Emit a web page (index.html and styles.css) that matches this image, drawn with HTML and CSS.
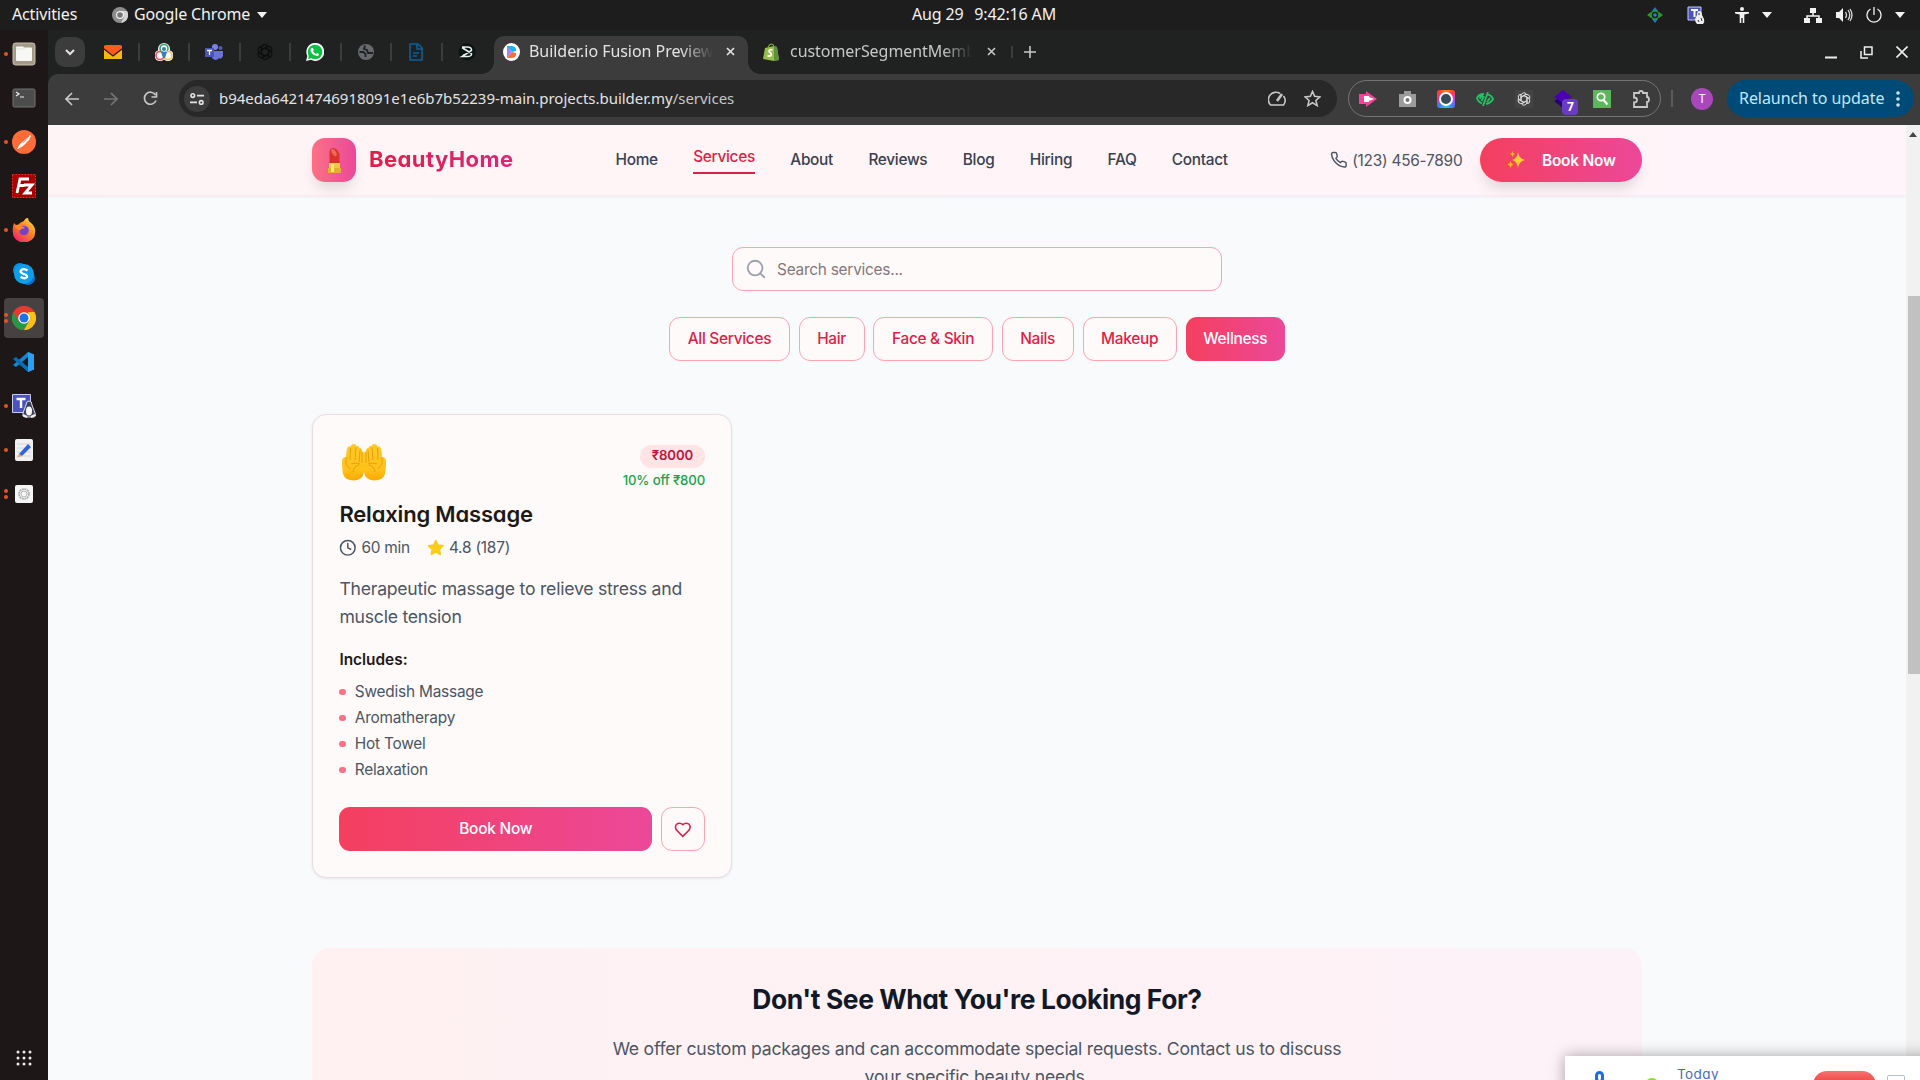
FILE: index.html
```html
<!DOCTYPE html>
<html lang="en">
<head>
<meta charset="utf-8">
<title>BeautyHome – Services</title>
<link rel="stylesheet" href="styles.css">
</head>
<body>
<div class="desktop">
  <div class="topbar">
    <span class="activities">Activities</span>
    <span class="app-menu">
      <svg width="16" height="16" viewBox="0 0 16 16"><circle cx="8" cy="8" r="8" fill="#8d8d8d"/><path d="M8 4h7A8 8 0 0 1 9 16l3-6z" fill="#d2d2d2"/><circle cx="8" cy="8" r="4" fill="#eee"/><circle cx="8" cy="8" r="2.8" fill="#777"/></svg>
      <span class="app-name">Google Chrome</span><i class="caret"></i>
    </span>
    <span class="clock"><span>Aug 29</span><span>9:42:16 AM</span></span>
    <span class="tray">
      <svg class="t1" width="16" height="16" viewBox="0 0 16 16"><path d="M8 0l3 4H5zM8 16l3-4H5z" fill="#1e78c8"/><path d="M0 8l4-3v6zM16 8l-4-3v6z" fill="#2a9a2a"/><circle cx="8" cy="8" r="4" fill="none" stroke="#2a9a2a" stroke-width="1.5"/><circle cx="8" cy="8" r="1.8" fill="#1e88d8"/></svg>
      <svg class="t2" width="18" height="18" viewBox="0 0 18 18"><path d="M1 1h13v13H1z" fill="#4b53bc" stroke="#c9cbf0"/><path d="M4 4h7M7.500 4v7" stroke="#fff" stroke-width="2"/><path d="M12 5q-2 0-2 4l-2 4q0 3 2 5h6q2-2 1-5l-2-4q0-4-3-4z" fill="#eee"/><path d="M11 8h2M11 14l1 2M14 12l1 3" stroke="#333"/></svg>
      <svg class="t3" width="14" height="16" viewBox="0 0 14 16" fill="#f2f2f2"><circle cx="7" cy="2" r="2"/><path d="M0 5h14v1.500L9.300 7.500V16H7.700v-5H6.300v5H4.700V7.500L0 6.500z"/></svg>
      <i class="caret"></i>
      <svg class="t4" width="18" height="16" viewBox="0 0 18 16" fill="#f2f2f2"><path d="M6 1h6v5H6zM0 11h6v5H0zM12 11h6v5h-6z"/><path d="M9 5v4M3 12V9h12v3" fill="none" stroke="#f2f2f2" stroke-width="1.500"/></svg>
      <svg class="t5" width="17" height="14" viewBox="0 0 17 14"><path d="M0 4h3l4-4v14l-4-4H0z" fill="#f2f2f2"/><path d="M9.500 4q2 3 0 6M12 2q3.500 5 0 10M14 1q4 6 0 12" fill="none" stroke="#ddd" stroke-width="1.300"/></svg>
      <svg class="t6" width="16" height="16" viewBox="0 0 16 16" fill="none" stroke="#f2f2f2" stroke-width="1.300"><path d="M8 0v8M4.500 2a7 7 0 1 0 7 0"/></svg>
      <i class="caret t7"></i>
    </span>
  </div>
  <div class="workspace">
    <nav class="dock">
      <div class="app run"><svg viewBox="0 0 24 24"><rect x="1" y="1" width="22" height="22" rx="2.500" fill="#a39b87" stroke="#c9c2b0"/><path d="M4 5.500q0-1 1-1h6l1 1h7q1 0 1 1V18q0 1-1 1H5q-1 0-1-1z" fill="#f7f7f5"/><path d="M4 7h8l1-1.500" fill="none" stroke="#dcd8cc" stroke-width=".7"/></svg></div>
      <div class="app"><svg viewBox="0 0 24 24"><rect x="1" y="3" width="22" height="18" rx="1.500" fill="#4c4c4c" stroke="#727272"/><path d="M4 6l3 2-3 2M8 11h4" fill="none" stroke="#eee" stroke-width="1.200"/></svg></div>
      <div class="app run"><svg viewBox="0 0 24 24"><circle cx="12" cy="12" r="12" fill="#ff6c37"/><path d="M5 19l3-5 7-6 3-3 1 1-2 4-6 6-5 3z" fill="#fff"/><path d="M11 13l6-7" stroke="#ff6c37" stroke-width=".8"/></svg></div>
      <div class="app"><svg viewBox="0 0 24 24"><path d="M0 0h24v24H0z" fill="#a90000"/><path d="M.5.5h23v23H.5z" fill="none" stroke="#d33" stroke-dasharray="1.500 1.500"/><path d="M5 19L8 5h9M6.500 11.500h6M12 11h8l-7 8h7" fill="none" stroke="#fff" stroke-width="2.800"/></svg></div>
      <div class="app run"><svg viewBox="0 0 24 24"><defs><linearGradient id="ff" x1="1" y1="0" x2=".2" y2="1"><stop offset="0" stop-color="#fff04f"/><stop offset=".45" stop-color="#ff8a20"/><stop offset="1" stop-color="#f0206e"/></linearGradient></defs><path d="M12 3Q13 0 16 0q0 3 3 5 5 4 4 10a11 9.500 0 0 1-22 0Q0 10 2 5l3 3q3-4 7-5z" fill="url(#ff)"/><circle cx="12" cy="12.500" r="4.800" fill="#7542c8"/><path d="M2 8q5-3 7 0 2 1 4 1-1 2-4 2-1 3-4 0z" fill="#ff8a20"/></svg></div>
      <div class="app"><svg viewBox="0 0 24 24"><circle cx="8" cy="8" r="7" fill="#0c8fdc"/><circle cx="16" cy="16" r="7" fill="#0c6fd0"/><circle cx="12" cy="12" r="10" fill="#0f9fe8"/><path d="M15.500 8.500Q12 6 9.500 8t1.500 3.800q4.500 1 4 3.200-1.500 2.500-6.500 0" fill="none" stroke="#fff" stroke-width="2.300"/></svg></div>
      <div class="app run two active"><svg viewBox="0 0 24 24"><circle cx="12" cy="12" r="12" fill="#e33b2e"/><path d="M1.600 6A12 12 0 0 0 12 24l5.200-9H7z" fill="#269747"/><path d="M22.400 6A12 12 0 0 1 12 24l5.200-9L16 6z" fill="#fbc116"/><path d="M1.600 6L7 15l5-9h10.400A12 12 0 0 0 1.600 6z" fill="#e33b2e"/><circle cx="12" cy="12" r="5.800" fill="#fff"/><circle cx="12" cy="12" r="4.500" fill="#1a73e8"/></svg></div>
      <div class="app"><svg viewBox="0 0 24 24"><path d="M16 2l6 2.500v15L16 22V7L4 17l-3-2z" fill="#1486cf"/><path d="M1 9l3-2 12 10v5z" fill="#0a6db5"/><path d="M16 2l6 2.500v15L16 22z" fill="#2ba0ee"/></svg></div>
      <div class="app run"><svg viewBox="0 0 24 24"><path d="M.5.500h18v18H.5z" fill="#4b53bc" stroke="#c9cbf0"/><path d="M4.500 5h9M9 5v9" stroke="#fff" stroke-width="2.400"/><path d="M17 7q-3 0-3 4l-3 8q-1 4 2 4h8q4 0 2-4l-3-8q0-4-3-4z" fill="#39415e" stroke="#ddd"/><ellipse cx="17" cy="17" rx="3" ry="4.500" fill="#fff"/><path d="M11 21l4 2M23 21l-4 2" stroke="#eee" stroke-width="2"/></svg></div>
      <div class="app run"><svg viewBox="0 0 24 24"><rect x="3" y="1" width="18" height="22" rx="2" fill="#f1f1f1"/><path d="M5 6h14M5 10h14M5 14h14M5 18h14" stroke="#d5d5d5"/><path d="M7 16L16 6l3 3-9 9z" fill="#2f62d9"/><path d="M7 16l3 2-5 1.500z" fill="#f0a060"/></svg></div>
      <div class="app run two"><svg viewBox="0 0 24 24"><rect x="3" y="3" width="18" height="18" rx="2" fill="#f5f5f5"/><circle cx="12" cy="12" r="5" fill="none" stroke="#aaa" stroke-width="1.600" stroke-dasharray="2 .6"/><circle cx="12" cy="12" r="3" fill="none" stroke="#b5b5b5"/></svg></div>
      <div class="app grid-app"><svg viewBox="0 0 24 24" fill="#eee"><circle cx="6" cy="6" r="1.500"/><circle cx="12" cy="6" r="1.500"/><circle cx="18" cy="6" r="1.500"/><circle cx="6" cy="12" r="1.500"/><circle cx="12" cy="12" r="1.500"/><circle cx="18" cy="12" r="1.500"/><circle cx="6" cy="18" r="1.500"/><circle cx="12" cy="18" r="1.500"/><circle cx="18" cy="18" r="1.500"/></svg></div>
    </nav>
    <div class="browser">
      <div class="tabstrip">
        <span class="tab-search"><svg width="10" height="7" viewBox="0 0 10 7"><path d="M1 1l4 4 4-4" fill="none" stroke="#e3e3e3" stroke-width="2"/></svg></span>
        <span class="pinned"><svg viewBox="0 0 18 18"><path d="M0 3h18v13H0z" fill="#fbb517"/><path d="M0 4q0-2 2-2h14q2 0 2 2v2l-9 7-9-7z" fill="#ff5a1f"/><path d="M0 6l9 7 9-7" fill="none" stroke="#2b1c10" stroke-width="1.300"/></svg></span>
        <span class="pinned"><svg viewBox="0 0 18 18"><circle cx="9" cy="6" r="6" fill="#fff"/><circle cx="5" cy="12.500" r="5.500" fill="#fff"/><circle cx="13" cy="12.500" r="5.500" fill="#fff"/><g fill="none" stroke-width="1.600"><circle cx="9" cy="5.500" r="4" stroke="#35a36a"/><circle cx="5" cy="12.500" r="4" stroke="#e8505b"/><circle cx="13" cy="12.500" r="4" stroke="#f3c344"/></g><circle cx="9" cy="6" r="2" fill="#3a7cbf"/><path d="M6 9h6l-2 6H8z" fill="#3a7cbf"/></svg></span>
        <span class="pinned"><svg viewBox="0 0 18 18"><circle cx="10" cy="4" r="3" fill="#7b83eb"/><circle cx="15.500" cy="5" r="2" fill="#5059c9"/><path d="M7 8h11v5q-2 4-4 2-3 4-7 0z" fill="#6b73db"/><path d="M0 5h9v9H0z" fill="#4b53bc"/><path d="M2 7.500h5M4.500 7.500V12" stroke="#fff" stroke-width="1.300"/></svg></span>
        <span class="pinned"><svg viewBox="0 0 18 18" fill="none" stroke="#0b0c0c" stroke-width="1.200"><use href="#knot"/></svg></span>
        <span class="pinned"><svg viewBox="0 0 18 18"><path d="M0 18l1.300-5A9 9 0 1 1 5 16.800z" fill="#fff"/><circle cx="9" cy="9" r="7.300" fill="#09c143"/><path d="M2 16l1-4 3 3z" fill="#09c143"/><path d="M5.500 5q1-1 2 1l.3 1-.8 1q1 2 3 3l1-1 2 1q0 2-2 2-5-1-6.500-5-.3-2 1-3z" fill="#fff"/></svg></span>
        <span class="pinned"><svg viewBox="0 0 18 18"><circle cx="9" cy="9" r="8" fill="#666a6e"/><path d="M2.500 9h4l2 2v3M8 2.500L7 6l3 1 1 3h5" fill="none" stroke="#202221" stroke-width="1.800"/></svg></span>
        <span class="pinned"><svg viewBox="0 0 18 18" fill="none" stroke="#075f9e" stroke-width="1.600"><path d="M3 1h8l4 4v12H3zM10 1v5h5M6 10h6M6 13h4"/></svg></span>
        <span class="pinned last"><svg viewBox="0 0 18 18"><circle cx="9" cy="9" r="8.500" fill="#071513"/><path d="M4 4h5q5 0 4.500 3.500L4 13.500h5q5 0 4.500-3L4 4.500M6 4v3M6 14v-3" fill="none" stroke="#eee" stroke-width="1.500"/></svg></span>
        <span class="tab active-tab">
          <svg width="17" height="18" viewBox="0 0 17 18"><ellipse cx="8.500" cy="9" rx="8.500" ry="9" fill="#fff"/><path d="M4 3h5q5 1 4 5L9 9 4 4z" fill="#18b4f4"/><path d="M4 3l5 6-5 6z" fill="#a97ff2"/><path d="M4 15l5-6 4 1q1 5-5 5z" fill="#fd6b3c"/></svg>
          <span class="tab-title">Builder.io Fusion Preview</span>
          <svg class="x" width="9" height="9" viewBox="0 0 9 9"><path d="M1 1l7 7M8 1L1 8" stroke="#e3e3e3" stroke-width="1.700"/></svg>
        </span>
        <span class="tab other-tab">
          <svg width="17" height="18" viewBox="0 0 17 18"><path d="M2 5l9-2 3 1 2 13-5 1L0 16z" fill="#95bf47"/><path d="M11 3l3 1 2 13-5 1z" fill="#5e8e3e"/><path d="M5 5q1-4 4-4 2 1 2 3" fill="none" stroke="#7fa83a" stroke-width="1.200"/><path d="M9.500 7Q6 6 6 8.500q3 2 2 4-2 1-3.500 0" fill="none" stroke="#fff" stroke-width="1.800"/></svg>
          <span class="tab-title">customerSegmentMemb</span>
          <svg class="x" width="9" height="9" viewBox="0 0 9 9"><path d="M1 1l7 7M8 1L1 8" stroke="#c7c7c7" stroke-width="1.600"/></svg>
        </span>
        <svg class="plus" width="12" height="12" viewBox="0 0 12 12"><path d="M6 0v12M0 6h12" stroke="#c7c7c7" stroke-width="1.600"/></svg>
        <span class="win">
          <svg width="12" height="14" viewBox="0 0 12 14"><path d="M0 12.500h12" stroke="#eee" stroke-width="2"/></svg>
          <svg width="13" height="13" viewBox="0 0 13 13" fill="none" stroke="#eee" stroke-width="1.500"><path d="M4.500 1h7.500v7.500H4.500zM1 5v7h7"/></svg>
          <svg width="12" height="12" viewBox="0 0 12 12"><path d="M.5.500l11 11M11.500.500l-11 11" stroke="#eee" stroke-width="1.600"/></svg>
        </span>
      </div>
      <div class="toolbar">
        <svg class="nav-i" width="14" height="14" viewBox="0 0 14 14" fill="none" stroke="#c7c7c7" stroke-width="1.700"><path d="M14 7H1.500M7 1L1 7l6 6"/></svg>
        <svg class="nav-i" width="14" height="14" viewBox="0 0 14 14" fill="none" stroke="#757575" stroke-width="1.700"><path d="M0 7h12.500M7 1l6 6-6 6"/></svg>
        <svg class="nav-i" width="15" height="15" viewBox="0 0 15 15" fill="none" stroke="#c7c7c7" stroke-width="1.700"><path d="M13 9.500A6 6 0 1 1 12.500 4M13.500 1v5h-5"/></svg>
        <div class="omnibox">
          <span class="site"><svg width="14" height="12" viewBox="0 0 14 12" fill="none" stroke="#e3e3e3" stroke-width="1.600"><circle cx="2.800" cy="2.600" r="1.800"/><path d="M7 2.600h7M0 9.400h7"/><circle cx="11.200" cy="9.400" r="1.800"/></svg></span>
          <span class="url">b94eda64214746918091e1e6b7b52239-main.projects.builder.my<span>/services</span></span>
          <svg class="dial" width="18" height="16" viewBox="0 0 18 16" fill="none" stroke="#c7c7c7" stroke-width="1.600"><path d="M12 2.500A7.500 7.500 0 0 0 2.500 14h13A7.500 7.500 0 0 0 15.500 5"/><path d="M14 3l-5 7" stroke-width="2.600"/></svg>
          <svg width="17" height="17" viewBox="0 0 24 24" fill="none" stroke="#c7c7c7" stroke-width="2.200"><path d="M12 2l3 7 7.500.7-5.700 5 1.800 7.300L12 18l-6.600 4 1.800-7.300-5.700-5L9 9z"/></svg>
        </div>
        <div class="extensions">
          <span><svg width="18" height="16" viewBox="0 0 18 16"><path d="M0 3h7V0l11 8-11 8v-3H0z" fill="#f2439b"/><path d="M5 5h5v1l5 2-5 2v1H5z" fill="#fff"/></svg></span>
          <span><svg width="17" height="16" viewBox="0 0 17 16"><path d="M5 0h7v3h5v13H0V3h5z" fill="#9b9b9b"/><circle cx="8.500" cy="9" r="3" fill="#777" stroke="#fff" stroke-width="2"/></svg></span>
          <span><i class="rainbow"><i></i></i></span>
          <span><svg width="18" height="14" viewBox="0 0 18 14" fill="none" stroke="#20c563" stroke-width="1.800"><path d="M8 2Q3 2 1 6q1 4 5 5.500M12 0L7 14M12 2.500q4 1 5 4.500-2 4-7 5M4 7q0-3 3-3M5.500 9L8 4M11 10l3-4"/></svg></span>
          <span><svg width="18" height="18" viewBox="0 0 18 18"><path d="M0 0h18v18H0z" fill="#444"/><g transform="translate(1.500 1.500) scale(.83)" fill="none" stroke="#ddd" stroke-width="1.200"><g id="knot"><path id="petal" d="M5.500 11V5a3.600 3.600 0 0 1 6.500-2M6 6.500l5.500-3.200"/><use href="#petal" transform="rotate(60 9 9)"/><use href="#petal" transform="rotate(120 9 9)"/><use href="#petal" transform="rotate(180 9 9)"/><use href="#petal" transform="rotate(240 9 9)"/><use href="#petal" transform="rotate(300 9 9)"/></g></g></svg></span>
          <span class="badged"><svg width="18" height="18" viewBox="0 0 18 18"><path d="M9 5l9 6-9 7-9-7z" fill="#250070"/><path d="M9 0l9 7-9 6-9-6z" fill="#4b00b5"/></svg><b>7</b></span>
          <span><svg width="18" height="18" viewBox="0 0 18 18"><path d="M0 0h18v18H0z" fill="#59b85a"/><circle cx="8" cy="7" r="3.700" fill="none" stroke="#fff" stroke-width="1.800"/><path d="M10.500 10l4 4.500" stroke="#fff" stroke-width="2.200"/></svg></span>
          <span><svg width="18" height="18" viewBox="0 0 18 18" fill="none" stroke="#c7c7c7" stroke-width="1.800"><path d="M2 3h5q0-2 2-2t2 2h4v4q2 0 2 2.500T15 12v5H2v-4.500q3 0 3-2.500T2 7.500z"/></svg></span>
        </div>
        <i class="tb-sep"></i>
        <span class="avatar">T</span>
        <span class="relaunch"><span>Relaunch to update</span><svg width="4" height="16" viewBox="0 0 4 16" fill="#c2e7ff"><circle cx="2" cy="2" r="1.800"/><circle cx="2" cy="8" r="1.800"/><circle cx="2" cy="14" r="1.800"/></svg></span>
      </div>
      <div class="viewport">
        <div class="page">
          <header class="site-header">
            <div class="container header-row">
              <span class="logo"><svg width="13" height="25" viewBox="0 0 13 25"><path d="M1.500 15V4q.5-4 3.500-4 4 0 6.500 6v9z" fill="#d9322f"/><ellipse cx="6" cy="4.500" rx="2" ry="4" fill="#ef6a55" transform="rotate(-32 6 4.500)"/><path d="M1 15h11v5H1z" fill="#f2c744"/><path d="M0 20h13v5H0z" fill="#e2ae35"/><path d="M3 16h3v8H3z" fill="#fbe486"/></svg></span>
              <span class="brand">BeautyHome</span>
              <nav class="menu"><a>Home</a><a class="current">Services</a><a>About</a><a>Reviews</a><a>Blog</a><a>Hiring</a><a>FAQ</a><a>Contact</a></nav>
              <span class="phone"><svg width="17.600" height="17.600" viewBox="0 0 24 24" fill="none" stroke="#4b5563" stroke-width="2" stroke-linecap="round" stroke-linejoin="round"><path d="M22 16.920v3a2 2 0 0 1-2.180 2 19.790 19.790 0 0 1-8.630-3.070 19.500 19.500 0 0 1-6-6 19.790 19.790 0 0 1-3.070-8.670A2 2 0 0 1 4.110 2h3a2 2 0 0 1 2 1.720c.127.960.361 1.903.7 2.810a2 2 0 0 1-.45 2.110L8.090 9.910a16 16 0 0 0 6 6l1.270-1.270a2 2 0 0 1 2.110-.45c.907.339 1.850.573 2.810.7A2 2 0 0 1 22 16.920z"/></svg>(123) 456-7890</span>
              <a class="book-pill"><svg width="18" height="18" viewBox="0 0 18 18"><path d="M11 1q.8 6.500 7 8-6.200 1.500-7 8-.8-6.500-6-8 5.200-1.500 6-8z" fill="#fdcc34"/><path d="M3.500 10q.5 3 3 3.500-2.500.5-3 3.500-.5-3-3-3.500 2.500-.5 3-3.500zM5.500 0q.4 2.500 2.500 3-2.100.5-2.500 3-.4-2.500-2.500-3 2.100-.5 2.500-3z" fill="#f9b21d"/></svg>Book Now</a>
            </div>
          </header>
          <main class="container">
            <div class="search"><svg width="22" height="22" viewBox="0 0 24 24" fill="none" stroke="#9ca3af" stroke-width="2" stroke-linecap="round"><circle cx="11" cy="11" r="8"/><path d="m21 21-4.300-4.300"/></svg>Search services...</div>
            <div class="chips"><a>All Services</a><a>Hair</a><a>Face &amp; Skin</a><a>Nails</a><a>Makeup</a><a class="selected">Wellness</a></div>
            <article class="card">
              <div class="card-top">
                <svg class="hands" width="44" height="37" viewBox="0 0 44 37"><defs><linearGradient id="skin" x1="0" y1="0" x2="0" y2="1"><stop offset="0" stop-color="#ffca28"/><stop offset=".7" stop-color="#ffc21a"/><stop offset="1" stop-color="#f9a800"/></linearGradient><g id="hand"><path d="M4 13Q4.500 4 6 3q1.500-1 2.500-.5Q9 0 11.500 0 14 0 14.300 2q3-.5 3.300 2 2.400 0 2.400 3 2 .3 2 3v18q-1 8-10 8.500Q3 36.500 1 30 0 25 0 18q0-5 4-5z" fill="url(#skin)"/><path d="M8.500 4L8 16M14 3l-1 13M18 6l-1 12M20 8v11M4 13v7l4 5M9 20q5-2 9 0M17 21q-5 1-6 7" fill="none" stroke="#e59a0a" stroke-width=".9"/></g></defs><use href="#hand"/><use href="#hand" transform="matrix(-1 0 0 1 44 0)"/></svg>
                <div class="price"><span class="badge">₹8000</span><span class="off">10% off ₹800</span></div>
              </div>
              <h3>Relaxing Massage</h3>
              <div class="meta">
                <svg width="17.600" height="17.600" viewBox="0 0 24 24" fill="none" stroke="#4b5563" stroke-width="2" stroke-linecap="round" stroke-linejoin="round"><circle cx="12" cy="12" r="10"/><path d="M12 6v6l4 2"/></svg><span class="duration">60 min</span>
                <svg width="17.600" height="17.600" viewBox="0 0 24 24" fill="#facc15" stroke="#facc15" stroke-width="2" stroke-linejoin="round"><path d="M12 2l3.090 6.260L22 9.270l-5 4.870 1.180 6.880L12 17.770l-6.180 3.250L7 14.140 2 9.270l6.910-1.010z"/></svg><span>4.8 (187)</span>
              </div>
              <p class="desc">Therapeutic massage to relieve stress and<br>muscle tension</p>
              <h4>Includes:</h4>
              <ul><li>Swedish Massage</li><li>Aromatherapy</li><li>Hot Towel</li><li>Relaxation</li></ul>
              <div class="actions"><a class="book">Book Now</a><a class="like"><svg width="17.600" height="17.600" viewBox="0 0 24 24" fill="none" stroke="#e11d48" stroke-width="2.200" stroke-linejoin="round"><path d="M19 14c1.490-1.460 3-3.210 3-5.500A5.500 5.500 0 0 0 16.500 3c-1.760 0-3 .5-4.500 2-1.500-1.500-2.740-2-4.500-2A5.500 5.500 0 0 0 2 8.500c0 2.300 1.500 4.050 3 5.500l7 7Z"/></svg></a></div>
            </article>
            <section class="cta"><h2>Don't See What You're Looking For?</h2><p>We offer custom packages and can accommodate special requests. Contact us to discuss<br>your specific beauty needs.</p></section>
          </main>
        </div>
        <div class="scrollbar"><i class="up"></i><i class="thumb"></i></div>
      </div>
    </div>
  </div>
  <aside class="reminder">
    <i class="ring"></i><i class="green"></i><span>Today</span><i class="red"></i><i class="box"></i>
  </aside>
</div>
</body>
</html>
```
FILE: styles.css
```css
* { box-sizing: border-box; }
body { margin: 0; overflow: hidden; }
svg { display: block; flex: none; }
.desktop { position: relative; width: 1920px; height: 1080px; overflow: hidden; display: flex; flex-direction: column; font-family: "Noto Sans", sans-serif; }

/* system bar */
.topbar { height: 30px; flex: none; display: grid; grid-template-columns: 112px 800px 144px 1fr; align-items: center; background: #1d1d1d; color: #f2f2f2; font-size: 16px; line-height: 29px; letter-spacing: -0.150px; }
.topbar > span { height: 30px; }
.activities { padding-left: 12px; }
.app-menu { display: flex; align-items: center; }
.app-name { margin: 0 7px 1px 6px; }
.caret { width: 0; height: 0; border: 5.500px solid transparent; border-top: 6px solid #f2f2f2; border-bottom: 0; }
.clock { display: flex; justify-content: space-between; white-space: nowrap; }
.tray { display: flex; align-items: center; justify-content: flex-end; padding-right: 15px; }
.t2 { margin-left: 24px; }
.t3 { margin: 0 13px 0 30px; }
.t4 { margin-left: 32px; }
.t5 { margin: 0 13px 0 14px; }
.t7 { margin-left: 13px; }

.workspace { flex: 1; min-height: 0; display: flex; }
.dock { width: 48px; flex: none; display: flex; flex-direction: column; align-items: center; padding: 4px 0 2px; gap: 4px; background: #1d1717; }
.app { width: 40px; height: 40px; display: flex; align-items: center; justify-content: center; border-radius: 4px; position: relative; }
.app svg { width: 24px; height: 24px; }
.app.active { background: #464241; }
.app.run::before { content: ""; position: absolute; left: 0; top: 18px; width: 4px; height: 4px; border-radius: 2px; background: #e95420; }
.app.two::before { top: 15px; box-shadow: 0 6px #e95420; }
.grid-app { margin-top: auto; }

/* browser chrome */
.browser { flex: 1; min-width: 0; display: flex; flex-direction: column; background: #202221; }
.tabstrip { height: 44px; flex: none; display: flex; align-items: center; padding: 0 12px 0 7px; }
.tab-search { width: 30px; height: 30px; border-radius: 10px; background: #3c3c3c; display: flex; align-items: center; justify-content: center; margin-right: 4px; }
.pinned { width: 50.500px; height: 18px; display: flex; justify-content: center; border-right: 2px solid #3c3c3c; }
.pinned svg { width: 18px; height: 18px; }
.pinned.last { border-color: transparent; }
.tab { display: flex; align-items: center; height: 38px; align-self: flex-end; padding-bottom: 7px; font-size: 16px; }
.tab-title { flex: 1; overflow: hidden; white-space: nowrap; letter-spacing: -0.050px; line-height: 24px; margin-top: -2px; }
.active-tab { width: 254px; margin-left: 1px; background: #3c3c3c; border-radius: 10px 10px 0 0; padding-left: 9px; padding-right: 13px; color: #e3e3e3; position: relative; }
.active-tab::before, .active-tab::after { content: ""; position: absolute; bottom: 0; width: 12px; height: 12px; }
.active-tab::before { left: -12px; background: radial-gradient(circle at 0 0, transparent 11.500px, #3c3c3c 12px); }
.active-tab::after { right: -12px; background: radial-gradient(circle at 100% 0, transparent 11.500px, #3c3c3c 12px); }
.active-tab .tab-title { margin: -2px 13px 0 9px; -webkit-mask-image: linear-gradient(90deg, #000 82%, transparent); mask-image: linear-gradient(90deg, #000 82%, transparent); }
.other-tab { width: 265px; padding-left: 15px; padding-right: 17px; color: #c7c7c7; }
.other-tab .tab-title { margin: -2px 15px 0 10px; -webkit-mask-image: linear-gradient(90deg, #000 84%, transparent); mask-image: linear-gradient(90deg, #000 84%, transparent); }
.plus { box-sizing: content-box; padding-left: 11px; border-left: 2px solid #3c3c3c; margin-left: -2px; }
.win { margin-left: auto; display: flex; align-items: center; gap: 23px; }
.toolbar { height: 51px; flex: none; display: flex; align-items: center; background: #3c3c3c; border-radius: 10px 0 0 0; padding: 0 6px 2px 17px; }
.nav-i { margin-right: 25px; }
.nav-i:nth-child(3) { margin-right: 21px; }
.omnibox { width: 1158px; height: 37px; border-radius: 19px; background: #282828; display: flex; align-items: center; padding: 0 16px 0 5px; }
.site { width: 26px; height: 26px; border-radius: 13px; background: #3c3c3c; display: flex; align-items: center; justify-content: center; margin-right: 9px; }
.url { flex: 1; font-size: 15px; color: #e3e3e3; letter-spacing: -0.020px; white-space: nowrap; margin-top: -2px; }
.url span { color: #c7c7c7; }
.dial { margin-right: 18px; }
.extensions { width: 313px; height: 37px; margin-left: 11px; border: 1px solid #757575; border-radius: 19px; display: flex; }
.extensions span { flex: 1; display: flex; align-items: center; justify-content: center; position: relative; }
.rainbow { width: 18px; height: 18px; border-radius: 3px; background: conic-gradient(#ff8a00, #ff3d3d, #d43df0, #3f7bff, #20d5d8, #3f7bff, #f02aa0, #ff3d3d, #ff8a00); display: flex; align-items: center; justify-content: center; }
.rainbow i { width: 14px; height: 14px; border-radius: 7px; background: #344b5c; border: 2px solid #fff; }
.badged b { position: absolute; left: 19px; top: 18px; width: 16px; height: 16px; border-radius: 4px; background: #6a3bc7; color: #fff; font-size: 12px; line-height: 16px; text-align: center; }
.tb-sep { width: 2px; height: 17px; background: #5b5b5b; margin-left: 10px; }
.avatar { width: 22px; height: 22px; border-radius: 11px; background: #ab47bc; color: #fff; font-size: 12px; line-height: 22px; text-align: center; margin: 0 14px 0 18px; }
.relaunch { flex: 1; height: 37px; border-radius: 19px; background: #004a77; color: #c2e7ff; font-size: 16px; letter-spacing: -0.060px; display: flex; align-items: center; justify-content: space-between; padding: 0 14px 0 12px; white-space: nowrap; }
.relaunch span { margin-top: -2px; }

/* page */
.viewport { flex: 1; min-height: 0; display: flex; font-family: Inter, sans-serif; letter-spacing: -0.210px; }
.page { width: 1858px; background: #f9fafc; overflow: hidden; }
.container { width: 1330px; margin: 0 auto; }
.site-header { height: 71px; background: linear-gradient(90deg, #fff4f5, #fff4f9); border-bottom: 1px solid #fceaf0; box-shadow: 0 1px 3px rgba(0,0,0,.05); }
.header-row { height: 70px; display: flex; align-items: center; font-size: 15.400px; }
.logo { width: 44px; height: 44px; border-radius: 13px; background: linear-gradient(90deg, #fb7185, #ec4899); display: flex; align-items: center; justify-content: center; box-shadow: 0 9px 14px -3px rgba(0,0,0,.12); }
.brand { width: 146px; margin-left: 13px; margin-top: -2px; font-size: 22px; font-weight: 700; letter-spacing: 0.430px; font-feature-settings: "cv11"; background: linear-gradient(90deg, #e11d48, #db2777); -webkit-background-clip: text; background-clip: text; color: transparent; }
.menu { display: flex; gap: 35.400px; margin-left: 100.500px; font-weight: 500; letter-spacing: -0.300px; color: #374151; align-items: center; line-height: 22px; }
.current { color: #e11d48; border-bottom: 2px solid #e11d48; padding-bottom: 4px; }
.phone { margin-left: auto; display: flex; align-items: center; gap: 4.400px; color: #4b5563; white-space: nowrap; letter-spacing: -0.240px; }
.book-pill { width: 162px; height: 44px; margin-left: 17.600px; border-radius: 22px; background: linear-gradient(90deg, #f43f5e, #ec4899); color: #fff; font-weight: 600; display: flex; align-items: center; padding-left: 27px; gap: 17px; box-shadow: 0 9px 14px -3px rgba(0,0,0,.13); white-space: nowrap; letter-spacing: -0.200px; }
.search { width: 490px; height: 44px; margin: 51px auto 26px; border: 1px solid #fda4af; border-radius: 11px; background: #fffafa; display: flex; align-items: center; gap: 10px; padding-left: 12px; font-size: 15.400px; letter-spacing: -0.240px; color: #84777a; }
.chips { display: flex; justify-content: center; gap: 8.800px; font-size: 15.400px; font-weight: 500; letter-spacing: -0.290px; color: #e11d48; }
.chips a { height: 44px; line-height: 42px; padding: 0 17.600px; border: 1px solid #fda4af; border-radius: 11px; background: #fffafa; }
.chips .selected { border: 0; line-height: 44px; background: linear-gradient(90deg, #f43f5e, #ec4899); color: #fff; }
.card { width: 420px; height: 464px; margin-top: 53px; padding: 26px 26px 26px 26.400px; border: 1px solid #eadde1; border-radius: 14px; background: #fffafa; box-shadow: 0 1px 3px rgba(0,0,0,.08); display: flex; flex-direction: column; color: #4b5563; font-size: 15.400px; }
.card-top { height: 56px; display: flex; justify-content: space-between; flex: none; }
.hands { margin: 3px 0 0 3px; }
.price { display: flex; flex-direction: column; align-items: flex-end; padding-top: 4px; font-size: 13.200px; font-feature-settings: "cv11"; letter-spacing: -0.150px; }
.badge { height: 23px; line-height: 21px; padding: 0 12px; border-radius: 12px; background: #ffe4e6; color: #be123c; font-weight: 600; }
.off { color: #16a34a; font-weight: 500; line-height: 18px; margin-top: 3px; }
.card h3 { margin: 2px 0 0; font-size: 22px; line-height: 30px; font-weight: 600; letter-spacing: -0.180px; color: #1c1917; font-feature-settings: "cv11"; }
.meta { display: flex; align-items: center; gap: 4.400px; line-height: 22px; margin-top: 8px; }
.duration { margin-right: 12.500px; }
.desc { margin: 16px 0 0; font-size: 17.600px; line-height: 28px; white-space: nowrap; letter-spacing: -0.225px; }
.card h4 { margin: 18px 0 8px; font-size: 15.400px; line-height: 22px; font-weight: 600; color: #1c1917; letter-spacing: 0; }
.card ul { list-style: none; margin: 0; padding: 0; display: grid; grid-auto-rows: 26px; line-height: 26px; }
.card li { display: flex; align-items: center; gap: 8.800px; }
.card li::before { content: ""; width: 6.600px; height: 6.600px; border-radius: 50%; background: #fb7185; }
.actions { display: flex; gap: 8.800px; margin-top: auto; }
.actions a { height: 44px; border-radius: 11px; display: flex; align-items: center; justify-content: center; }
.actions .book { flex: 1; background: linear-gradient(90deg, #f43f5e, #ec4899); color: #fff; font-weight: 500; padding-bottom: 1px; }
.actions .like { width: 44px; border: 1px solid #fda4af; padding-top: 2px; }
.cta { height: 260px; margin-top: 70px; border-radius: 17.600px; background: linear-gradient(90deg, #fff1f2, #fdf2f8); text-align: center; padding-top: 33px; }
.cta h2 { margin: 0; font-size: 26.400px; line-height: 36px; font-weight: 700; letter-spacing: -0.400px; color: #111827; font-feature-settings: "cv11"; }
.cta p { margin: 18px 0 0; font-size: 17.600px; line-height: 28px; color: #4b5563; letter-spacing: -0.228px; }
.scrollbar { width: 14px; background: #f1f1f1; display: flex; flex-direction: column; align-items: center; }
.up { width: 0; height: 0; margin-top: 7px; border: 4.500px solid transparent; border-bottom: 5px solid #444; border-top: 0; }
.thumb { width: 12px; height: 378px; margin: 159px 0 0 2px; background: #c1c1c1; }

/* notification lying over the window */
.reminder { position: absolute; left: 1565px; top: 1056px; width: 355px; height: 24px; overflow: hidden; background: #fff; display: flex; align-items: flex-start; font: 400 13.500px/18px Inter, sans-serif; color: #4a6cbb; font-feature-settings: "cv11"; }
.desktop::after { content: ""; position: absolute; left: 1565px; top: 1056px; width: 400px; height: 60px; box-shadow: 0 0 14px rgba(0,0,0,.35); clip-path: polygon(-30px -30px, 400px -30px, 400px 0, 0 0, 0 60px, -30px 60px); }
.ring { width: 9px; height: 12px; margin: 15px 0 0 30px; border: 3px solid #1b70d6; border-radius: 5px; }
.green { width: 14px; height: 14px; margin: 22px 0 0 41px; border-radius: 7px; background: #8ee02f; }
.reminder span { margin: 9px 0 0 18px; width: 42px; letter-spacing: 0.400px; }
.red { width: 63px; height: 40px; margin: 15px 0 0 94px; border-radius: 14px; background: linear-gradient(#f87171, #ef4444 12px); }
.box { width: 18px; height: 18px; margin: 19px 0 0 11px; border: 1px solid #b6bfd4; border-radius: 2px; }
```
